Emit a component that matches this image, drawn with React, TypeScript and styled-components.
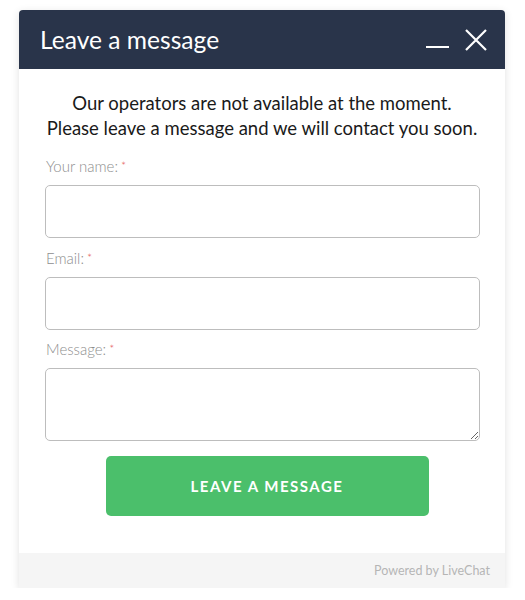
import React from "react";
import styled, { createGlobalStyle } from "styled-components";

const GlobalStyle = createGlobalStyle`
  html, body {
    margin: 0;
    padding: 0;
    background: #ffffff;
    font-family: Lato, "Noto Sans", sans-serif;
  }
  * {
    box-sizing: border-box;
  }
`;

const Page = styled.div`
  padding: 10px 20px 0 19px;
  width: 525px;
`;

const Window = styled.div`
  width: 486px;
  border-radius: 4px 4px 0 0;
  overflow: hidden;
  background: #ffffff;
  box-shadow: 0 2px 8px rgba(0, 0, 0, 0.12);
`;

const Header = styled.div`
  display: flex;
  align-items: center;
  justify-content: space-between;
  height: 59px;
  padding: 0 17px 0 21px;
  background: #29344a;
  color: #ffffff;
`;

const Title = styled.h1`
  margin: 0;
  font-size: 24.6px;
  font-weight: 400;
`;

const Controls = styled.div`
  display: flex;
  align-items: center;
  gap: 14px;
`;

const IconButton = styled.button`
  display: flex;
  padding: 0;
  border: none;
  background: none;
  color: #ffffff;
  cursor: pointer;
`;

const Body = styled.form`
  padding: 22px 26px 37px 26px;
`;

const Notice = styled.p`
  margin: 0 -16px 16px;
  text-align: center;
  white-space: nowrap;
  font-size: 18.5px;
  line-height: 25px;
  color: #1a1a1a;
`;

const Field = styled.div<{ $tight?: boolean }>`
  display: flex;
  flex-direction: column;
  margin-top: ${({ $tight }) => ($tight ? "-1px" : "0")};
  margin-bottom: 11px;
`;

const Label = styled.label`
  margin-bottom: 10px;
  padding-left: 1px;
  font-size: 15px;
  font-weight: 300;
  line-height: 18px;
  color: #8e8e8e;
`;

const Star = styled.span`
  color: #e55656;
  font-size: 12px;
  vertical-align: top;
  margin-left: 3px;
`;

const Input = styled.input`
  width: 435px;
  height: 53px;
  padding: 0 12px;
  border: 1px solid #bdbdbd;
  border-radius: 5px;
  font-family: inherit;
  font-size: 15px;
  outline: none;
`;

const TextArea = styled.textarea`
  display: block;
  width: 435px;
  height: 73px;
  padding: 10px 12px;
  border: 1px solid #bdbdbd;
  border-radius: 5px;
  font-family: inherit;
  font-size: 15px;
  resize: vertical;
  outline: none;
`;

const SubmitRow = styled.div`
  display: flex;
  justify-content: center;
  padding-top: 4px;
  padding-left: 10px;
`;

const SubmitButton = styled.button`
  width: 323px;
  height: 60px;
  border: none;
  border-radius: 5px;
  background: #4bbf6b;
  color: #ffffff;
  font-family: inherit;
  font-size: 15px;
  font-weight: 700;
  letter-spacing: 1.5px;
  text-transform: uppercase;
  cursor: pointer;
`;

const Footer = styled.div`
  display: flex;
  justify-content: flex-end;
  align-items: center;
  height: 35px;
  padding: 0 15px;
  background: #f5f5f5;
  font-size: 12.5px;
  color: #b5b5b5;
`;

function MinimizeIcon() {
  return (
    <svg width="24" height="24" viewBox="0 0 24 24">
      <line x1="0" y1="19" x2="23" y2="19" stroke="currentColor" strokeWidth="2" />
    </svg>
  );
}

function CloseIcon() {
  return (
    <svg width="24" height="24" viewBox="0 0 24 24">
      <path d="M2 2 L22 22 M22 2 L2 22" stroke="currentColor" strokeWidth="2.2" />
    </svg>
  );
}

const fields = [
  { id: "name", label: "Your name:", type: "text" },
  { id: "email", label: "Email:", type: "email" },
];

export default function App() {
  return (
    <>
      <GlobalStyle />
      <Page>
        <Window>
          <Header>
            <Title>Leave a message</Title>
            <Controls>
              <IconButton type="button" aria-label="Minimize">
                <MinimizeIcon />
              </IconButton>
              <IconButton type="button" aria-label="Close">
                <CloseIcon />
              </IconButton>
            </Controls>
          </Header>
          <Body onSubmit={(e) => e.preventDefault()}>
            <Notice>
              Our operators are not available at the moment.
              <br />
              Please leave a message and we will contact you soon.
            </Notice>
            {fields.map((f) => (
              <Field key={f.id}>
                <Label htmlFor={f.id}>
                  {f.label}
                  <Star>*</Star>
                </Label>
                <Input id={f.id} type={f.type} />
              </Field>
            ))}
            <Field $tight>
              <Label htmlFor="message">
                Message:
                <Star>*</Star>
              </Label>
              <TextArea id="message" />
            </Field>
            <SubmitRow>
              <SubmitButton type="submit">Leave a message</SubmitButton>
            </SubmitRow>
          </Body>
          <Footer>Powered by LiveChat</Footer>
        </Window>
      </Page>
    </>
  );
}
